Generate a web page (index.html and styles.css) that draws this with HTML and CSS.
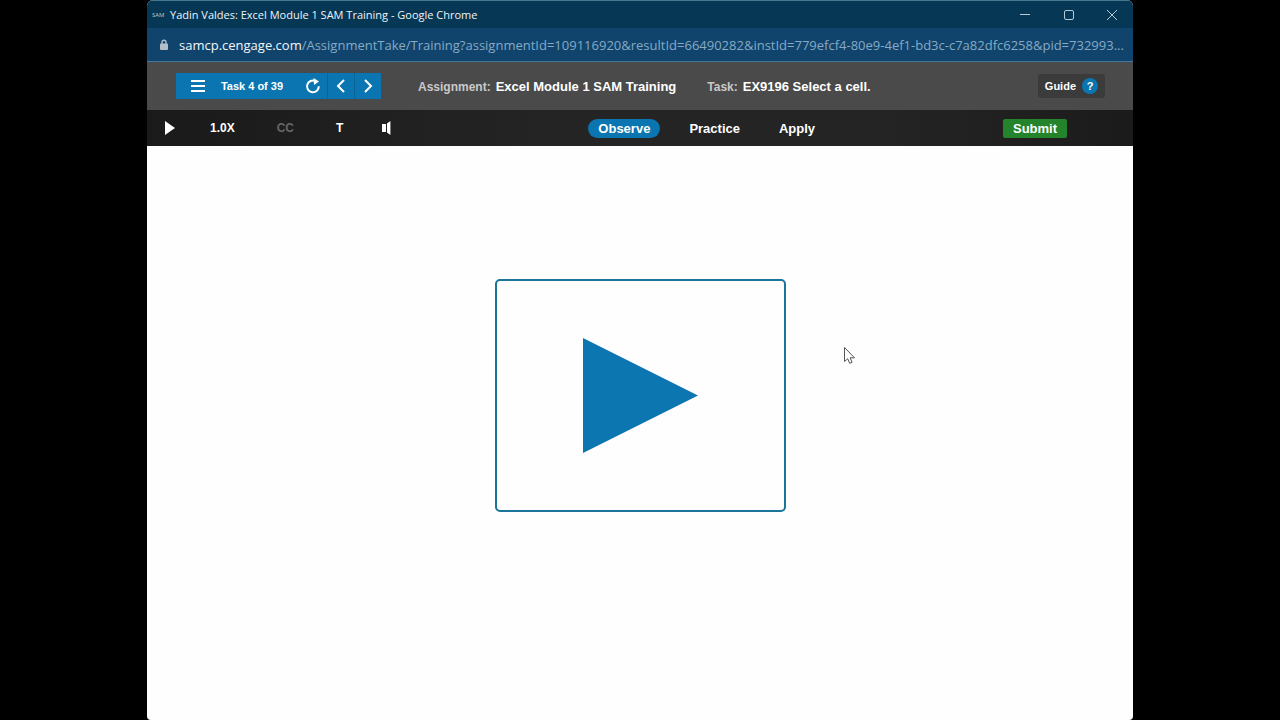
FILE: index.html
```html
<!DOCTYPE html>
<html lang="en">
<head>
<meta charset="utf-8">
<title>Yadin Valdes: Excel Module 1 SAM Training</title>
<link rel="stylesheet" href="styles.css">
</head>
<body>
<div class="window">
  <header class="titlebar">
    <span class="favicon">SAM</span>
    <span class="window-title">Yadin Valdes: Excel Module 1 SAM Training - Google Chrome</span>
    <div class="window-controls">
      <button type="button" aria-label="Minimize"><svg width="12" height="12" viewBox="0 0 12 12"><path d="M1 5.5h10"/></svg></button>
      <button type="button" aria-label="Maximize"><svg width="12" height="12" viewBox="0 0 12 12"><rect x="1.5" y="1.5" width="9" height="9" rx="1.5"/></svg></button>
      <button type="button" aria-label="Close"><svg width="12" height="12" viewBox="0 0 12 12"><path d="M1 1l10 10M11 1L1 11"/></svg></button>
    </div>
  </header>
  <div class="addressbar">
    <svg class="lock" width="10" height="12" viewBox="0 0 10 12"><path d="M3 5V3.2a2 2 0 0 1 4 0V5" fill="none" stroke="#b3bec7" stroke-width="1.4"/><rect x="1" y="4.5" width="8" height="6.5" rx="1" fill="#b3bec7"/></svg>
    <div class="url"><span class="host">samcp.cengage.com</span>/AssignmentTake/Training?assignmentId=109116920&amp;resultId=66490282&amp;instId=779efcf4-80e9-4ef1-bd3c-c7a82dfc6258&amp;pid=732993...</div>
  </div>
  <div class="taskbar">
    <nav class="task-nav">
      <button type="button" class="task-list"><svg width="14" height="14" viewBox="0 0 14 14"><path d="M0 2h14M0 7h14M0 12h14" stroke="#fff" stroke-width="1.8"/></svg>Task 4 of 39</button>
      <button type="button" class="reload" aria-label="Restart task"><svg width="16" height="16" viewBox="0 0 16 16"><path d="M13.8 8.2A5.9 5.9 0 1 1 10.5 3.1" fill="none" stroke="#fff" stroke-width="2"/><path d="M8.6 0L14 3.6L9 7z" fill="#fff"/></svg></button>
      <button type="button" class="step" aria-label="Previous task"><svg width="10" height="14" viewBox="0 0 10 14"><path d="M8 1L2 7l6 6"/></svg></button>
      <button type="button" class="step" aria-label="Next task"><svg width="10" height="14" viewBox="0 0 10 14"><path d="M2 1l6 6-6 6"/></svg></button>
    </nav>
    <dl class="details">
      <div><dt>Assignment:</dt><dd>Excel Module 1 SAM Training</dd></div>
      <div><dt>Task:</dt><dd>EX9196 Select a cell.</dd></div>
    </dl>
    <button type="button" class="guide">Guide <span class="help">?</span></button>
  </div>
  <div class="playbar">
    <div class="player">
      <button type="button" class="play" aria-label="Play"><svg width="10" height="14" viewBox="0 0 10 14"><path d="M0 0l10 7-10 7z" fill="#fff"/></svg></button>
      <button type="button" class="speed">1.0X</button>
      <button type="button" class="captions" disabled>CC</button>
      <button type="button" class="transcript">T</button>
      <button type="button" class="volume" aria-label="Volume"><svg width="10" height="14" viewBox="0 0 10 14"><path d="M1 3h4v8H1zM6 2.6L9.4 0v14L6 11.4z" fill="#fff"/></svg></button>
    </div>
    <div class="modes">
      <button type="button" class="mode active">Observe</button>
      <button type="button" class="mode">Practice</button>
      <button type="button" class="mode">Apply</button>
    </div>
    <button type="button" class="submit">Submit</button>
  </div>
  <main class="stage">
    <button type="button" class="big-play" aria-label="Play video"><svg width="115" height="115" viewBox="0 0 115 115"><path d="M0 0l115 57.5L0 115z" fill="#0b76af"/></svg></button>
    <svg class="cursor" width="13" height="19" viewBox="0 0 13 19"><path d="M1.5 1.5v14l3.2-2.8 2 4.6 2.4-1-2-4.5h4.4z" fill="#fff" stroke="#555" stroke-width="1"/></svg>
  </main>
</div>
</body>
</html>
```
FILE: styles.css
```css
* { box-sizing: border-box; }

body {
  margin: 0;
  padding: 0 147px;
  background: #000;
  font-family: "Liberation Sans", Arial, sans-serif;
  font-weight: bold;
  color: #fff;
}

button {
  margin: 0;
  padding: 0;
  border: 0;
  background: none;
  color: inherit;
  font: inherit;
  white-space: nowrap;
}

svg { display: block; flex: none; }

.window {
  display: flex;
  flex-direction: column;
  min-height: 100vh;
  background: #fefefe;
  border-radius: 6px 6px 4px 4px;
  overflow: hidden;
}

.titlebar {
  display: flex;
  align-items: center;
  height: 28px;
  padding-left: 5px;
  border-top: 1px solid #44788f;
  background: #063754;
  font: 11px/16px "Open Sans", sans-serif;
  color: #eef4f8;
}

.favicon { width: 18px; font-size: 6px; color: #b9cad5; }
.window-title { flex: 1; white-space: nowrap; }
.window-controls { display: flex; }
.window-controls button { display: grid; place-items: center; width: 44px; height: 26px; }
.window-controls button:last-child { width: 42px; }
.window-controls path, .window-controls rect { fill: none; stroke: #b5cbd7; }

.addressbar {
  display: flex;
  align-items: center;
  gap: 10px;
  height: 34px;
  padding: 0 4px 0 12px;
  border-bottom: 1px solid #417798;
  background: #10446c;
}

.url {
  font: 13px/20px "Open Sans", sans-serif;
  color: #86aac5;
  white-space: nowrap;
}
.host { color: #f2f7fa; }

.taskbar {
  display: flex;
  align-items: center;
  height: 48px;
  padding: 0 28px 0 29px;
  background: #4a4a4a;
}

.task-nav { display: flex; height: 26px; background: #0a75b0; font-size: 11px; }
.task-nav button { display: flex; align-items: center; justify-content: center; }
.task-list { gap: 16px; width: 122px; }
.reload { width: 29px; }
.task-nav .step { width: 27px; border-left: 1px solid #086396; }
.step path { fill: none; stroke: #fff; stroke-width: 2; }

.details { display: flex; flex: 1; gap: 31px; margin: 0 0 0 37px; }
.details div { display: flex; align-items: baseline; gap: 5px; white-space: nowrap; }
dt { font-size: 12px; color: #c9c9c9; }
dd { margin: 0; font-size: 13px; }

.guide {
  display: flex;
  align-items: center;
  gap: 6px;
  height: 24px;
  padding: 0 7px;
  border-radius: 3px;
  background: #3b3b3b;
  font-size: 11px;
}
.help {
  display: grid;
  place-items: center;
  width: 16px;
  height: 16px;
  border-radius: 50%;
  background: #0a75b0;
}

.playbar {
  display: grid;
  grid-template-columns: 7fr auto 4fr;
  align-items: center;
  height: 36px;
  padding: 0 66px 0 18px;
  background: linear-gradient(90deg, #1a1a1a, #242424 40%, #242424 75%, #1b1b1b);
  font-size: 13px;
}

.player { display: flex; align-items: center; gap: 42px; font-size: 12px; }
.speed { margin-left: -7px; }
.captions { color: #666; }
.volume { margin-left: -4px; }

.modes { display: flex; gap: 19px; }
.mode { height: 19px; padding: 0 10px; border-radius: 10px; }
.mode.active { background: #0a75b0; }

.submit {
  justify-self: end;
  width: 64px;
  height: 19px;
  border-radius: 2px;
  background: #23842b;
}

.stage {
  position: relative;
  flex: 1;
  display: flex;
  justify-content: center;
  align-items: flex-start;
  padding-top: 133px;
}

.big-play {
  display: grid;
  place-items: center;
  width: 291px;
  height: 233px;
  border: 2px solid #1b7499;
  border-radius: 5px;
}

.cursor { position: absolute; left: 696px; top: 200px; }
```
